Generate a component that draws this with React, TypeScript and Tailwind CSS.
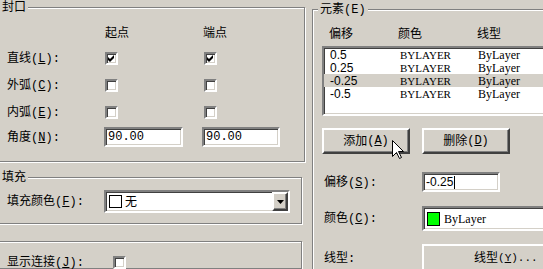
import type { ReactNode } from 'react';

const sunken =
  'bg-white border-2 border-t-[#808080] border-l-[#808080] border-b-white border-r-white shadow-[inset_1px_1px_0_#404040,inset_-1px_-1px_0_#d4d0c8]';
const raised =
  'bg-[#d4d0c8] border-2 border-t-white border-l-white border-b-[#404040] border-r-[#404040] shadow-[inset_-1px_-1px_0_#808080]';
const etched = 'border border-[#808080] shadow-[inset_1px_1px_0_#fff,1px_1px_0_#fff]';

// Latin part of a label, drawn half-width like the dialog's bitmap font
function Key({ k, tail = '', className = '' }: { k: string; tail?: string; className?: string }) {
  return (
    <span className={`font-['Liberation_Mono',monospace] ${className}`}>
      (<u>{k}</u>){tail}
    </span>
  );
}

function Label({ text, k }: { text: string; k?: string }) {
  return (
    <span className="whitespace-nowrap">
      {text}
      {k ? <Key k={k} tail=":" /> : <span className="font-['Liberation_Mono',monospace]">:</span>}
    </span>
  );
}

function Check({ checked }: { checked?: boolean }) {
  return (
    <span className={`${sunken} w-[13px] h-[13px] flex items-center justify-center`}>
      {checked && (
        <svg width="7" height="7" viewBox="0 0 7 7">
          <path d="M0 2 L2 4 L6 0 L6 3 L2 7 L0 5 Z" fill="#000" />
        </svg>
      )}
    </span>
  );
}

function Row({ children, h, className = '' }: { children: ReactNode; h: string; className?: string }) {
  return <div className={`grid grid-cols-[98px_99px_100px] items-center ${h} ${className}`}>{children}</div>;
}

const rows = [
  { off: '0.5', sel: false },
  { off: '0.25', sel: false },
  { off: '-0.25', sel: true },
  { off: '-0.5', sel: false },
];

export default function App() {
  return (
    <div className="relative w-[543px] h-[269px] overflow-hidden bg-[#d4d0c8] text-black text-[12px] leading-[14px] font-['Liberation_Sans','Noto_Sans_CJK_SC',sans-serif] flex">
      {/* left column */}
      <div className="flex flex-col w-[308px] -ml-[6px] shrink-0">
        <fieldset className={`${etched} pb-[13px]`}>
          <legend className="ml-[5px] px-[2px] bg-[#d4d0c8] leading-[14px]">封口</legend>
          <div className="pl-[12px]">
            <Row h="h-[14px]" className="mt-[12px]">
              <span />
              <span>起点</span>
              <span className="-ml-[1px]">端点</span>
            </Row>
            <Row h="h-[27px]" className="mt-[5px]">
              <Label text="直线" k="L" />
              <Check checked />
              <Check checked />
            </Row>
            <Row h="h-[27px]">
              <Label text="外弧" k="C" />
              <Check />
              <Check />
            </Row>
            <Row h="h-[27px]">
              <Label text="内弧" k="E" />
              <Check />
              <Check />
            </Row>
            <Row h="h-[22px]">
              <Label text="角度" k="N" />
              <span className={`${sunken} -ml-[1px] w-[79px] h-[20px] pl-[2px] flex items-center font-['Liberation_Mono',monospace]`}>
                90.00
              </span>
              <span className={`${sunken} -ml-[2px] w-[78px] h-[20px] pl-[2px] flex items-center font-['Liberation_Mono',monospace]`}>
                90.00
              </span>
            </Row>
          </div>
        </fieldset>

        <fieldset className={`${etched} mt-[8px] pb-[10px]`}>
          <legend className="ml-[5px] px-[2px] bg-[#d4d0c8] leading-[14px]">填充</legend>
          <div className="pl-[12px] mt-[6px] h-[23px] grid grid-cols-[97px_186px] items-center">
            <Label text="填充颜色" k="F" />
            <div className={`${sunken} h-[23px] flex items-center`}>
              <span className="ml-[3px] w-[13px] h-[13px] border border-black bg-white" />
              <span className="ml-[3px] flex-1">无</span>
              <span className={`${raised} w-[16px] h-[19px] flex items-center justify-center`}>
                <svg width="7" height="4" viewBox="0 0 7 4">
                  <path d="M0 0 H7 L3.5 4 Z" fill="#000" />
                </svg>
              </span>
            </div>
          </div>
        </fieldset>

        <div className={`${etched} mt-[17px] pt-[13px] h-[60px]`}>
          <div className="pl-[12px] h-[13px] grid grid-cols-[106px_13px] items-center">
            <Label text="显示连接" k="J" />
            <Check />
          </div>
        </div>
      </div>

      {/* right column */}
      <fieldset className={`${etched} ml-[10px] mt-[2px] w-[260px] shrink-0 h-[300px]`}>
        <legend className="ml-[5px] px-[2px] bg-[#d4d0c8] leading-[14px] whitespace-nowrap">
          元素<span className="font-['Liberation_Mono',monospace]">(E)</span>
        </legend>
        <div className="pl-[9px] flex flex-col">
          <div className="mt-[10px] h-[14px] pl-[7px] grid grid-cols-[69px_79px_80px] items-center">
            <span>偏移</span>
            <span>颜色</span>
            <span>线型</span>
          </div>
          <div className={`${sunken} mt-[5px] h-[70px] w-[240px]`}>
            {rows.map((r) => (
              <div
                key={r.off}
                className={`h-[13px] pl-[6px] grid grid-cols-[70px_78px_80px] items-center ${r.sel ? 'bg-[#d4d0c8]' : ''}`}
              >
                <span>{r.off}</span>
                <span className="font-['Liberation_Serif',serif] text-[11px]">BYLAYER</span>
                <span className="font-['Liberation_Serif',serif]">ByLayer</span>
              </div>
            ))}
          </div>
          <div className="mt-[12px] flex gap-[12px]">
            <button className={`${raised} w-[88px] h-[26px] flex items-center justify-center whitespace-nowrap`}>
              添加<Key k="A" />
            </button>
            <button className={`${raised} w-[88px] h-[26px] flex items-center justify-center whitespace-nowrap`}>
              删除<Key k="D" />
            </button>
          </div>
          <div className="mt-[18px] h-[20px] grid grid-cols-[100px_78px] items-center">
            <span className="pl-[2px]">
              <Label text="偏移" k="S" />
            </span>
            <span className={`${sunken} h-[20px] pl-[2px] flex items-center`}>
              -0.25<span className="ml-[1px] w-[1px] h-[13px] bg-black" />
            </span>
          </div>
          <div className="mt-[14px] h-[25px] grid grid-cols-[100px_140px] items-center">
            <span className="pl-[2px]">
              <Label text="颜色" k="C" />
            </span>
            <span className={`${sunken} h-[25px] flex items-center`}>
              <span className="ml-[3px] w-[13px] h-[14px] border border-black bg-[#00ff00]" />
              <span className="ml-[4px] font-['Liberation_Serif',serif]">ByLayer</span>
            </span>
          </div>
          <div className="mt-[13px] h-[26px] grid grid-cols-[100px_140px] items-center">
            <span className="pl-[2px]">
              <Label text="线型" />
            </span>
            <button className={`${raised} h-[28px] flex items-center pl-[50px] whitespace-nowrap`}>
              线型<Key k="Y" tail="..." className="text-[11px]" />
            </button>
          </div>
        </div>
      </fieldset>

      {/* mouse pointer */}
      <svg className="absolute left-[392px] top-[140px]" width="13" height="20" viewBox="0 0 13 20">
        <path d="M0.5 0.5 L0.5 16.5 L4.5 12.5 L7.5 18.5 L9.5 17.5 L6.5 11.5 L11.5 11.5 Z" fill="#fff" stroke="#000" />
      </svg>
    </div>
  );
}
